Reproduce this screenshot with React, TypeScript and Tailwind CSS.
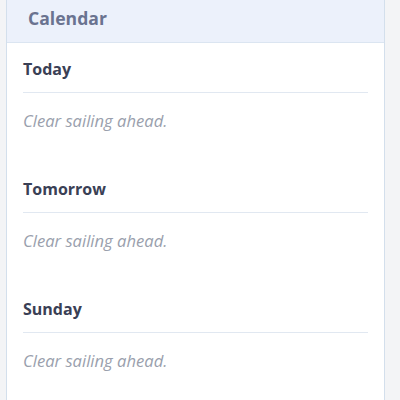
const days = ["Today", "Tomorrow", "Sunday"];

export default function App() {
  return (
    <div
      className="w-[400px] h-[400px] overflow-hidden bg-[#f3f4f6] pl-[6px] pr-[15px]"
      style={{ fontFamily: '"Open Sans", "Noto Sans", sans-serif' }}
    >
      <div className="h-[420px] bg-white border-x border-[#d3dfec]">
        {/* cabecera */}
        <div className="h-[43px] bg-[#ecf1fb] border-b border-[#dbe5f1] pl-[21px] pt-[6px]">
          <h1 className="text-[17.6px] leading-6 font-bold text-[#6a7390]">Calendar</h1>
        </div>

        {/* días */}
        <div className="px-4 pt-4 flex flex-col gap-[48px]">
          {days.map((d) => (
            <section key={d}>
              <h2 className="text-[16px] leading-5 font-bold text-[#3a4055] pb-[13px] border-b border-[#e1e8f1]">
                {d}
              </h2>
              <p className="mt-[18px] text-[16.6px] leading-5 italic text-[#9a9fad]">
                Clear sailing ahead.
              </p>
            </section>
          ))}
        </div>
      </div>
    </div>
  );
}
